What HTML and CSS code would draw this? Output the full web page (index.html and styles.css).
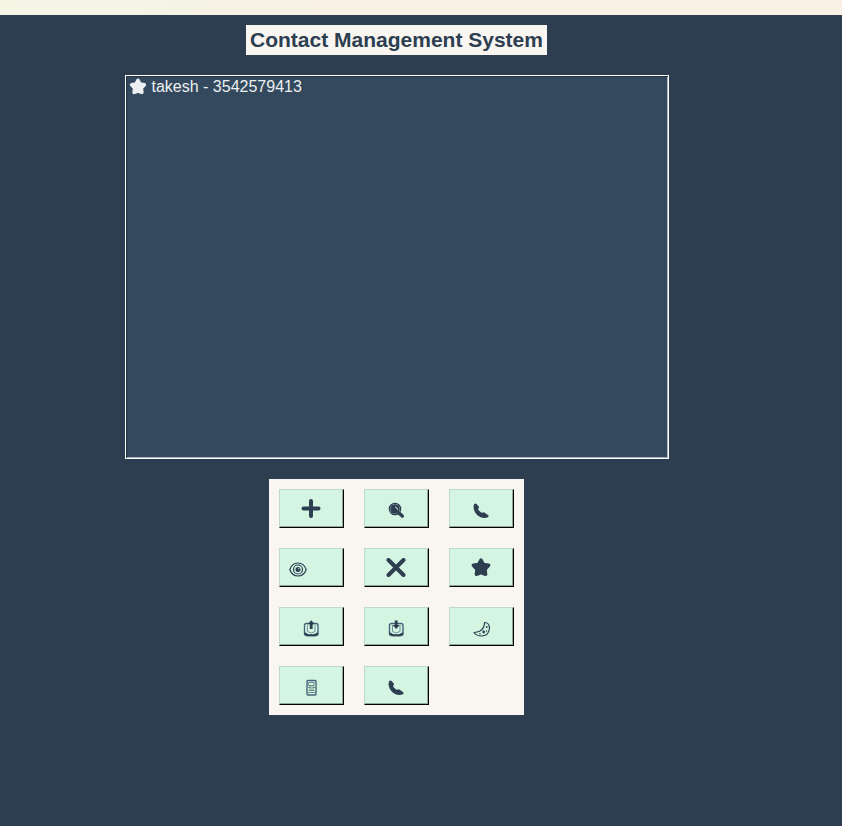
FILE: index.html
```html
<!DOCTYPE html>
<html lang="en">
<head>
<meta charset="utf-8">
<title>Contact Management System</title>
<link rel="stylesheet" href="styles.css">
</head>
<body>
<div class="strip"></div>
<main class="app">
  <h1 class="title">Contact Management System</h1>
  <ul class="contacts">
    <li class="contact">
      <svg class="star" viewBox="0 0 20 20" aria-hidden="true"><path d="M10 2.700l2.100 4 4.900.900-3.300 3.700.6 4.700-4.300-1.500-4.300 1.500.6-4.700L3 7.600l4.900-.900z"/></svg>
      <span>takesh - 3542579413</span>
    </li>
  </ul>
  <div class="actions">
    <button class="action" type="button" aria-label="Add contact">
      <svg class="icon" viewBox="0 0 20 20"><path class="thick" d="M10 2v15M2.500 9.500h15"/></svg>
    </button>
    <button class="action" type="button" aria-label="Search">
      <svg class="icon" viewBox="0 0 20 20"><circle class="solid" cx="9" cy="10" r="4.800"/><circle class="thin" cx="9" cy="10" r="5.700"/><path class="glint" d="M9.500 8q2 .500 2 2.300"/><path class="handle" d="M13.500 14.500l2.800 2.500"/></svg>
    </button>
    <button class="action" type="button" aria-label="Call">
      <svg class="icon" viewBox="0 0 20 20"><path class="solid" d="M3.300 5Q4.500 4 5.600 5L7.800 7.600Q8.200 9 7 10.200Q8.200 12.500 11 13.900Q12 12.800 13.300 13.500L17.300 16.200Q18 17.200 17 18.200Q12 20.300 7 16.800Q2.300 12.500 2.600 7.500Q2.700 5.600 3.300 5z"/></svg>
    </button>
    <button class="action action-start" type="button" aria-label="View contact">
      <svg class="icon" viewBox="0 0 20 20"><path class="thin" d="M1.800 11.500Q4 5 10 5t8.200 6.500Q16 18 10 18t-8.200-6.500z"/><circle class="thin" cx="10" cy="11.500" r="4.500"/><circle class="solid" cx="10" cy="11.500" r="2.500"/><circle class="spot" cx="10.800" cy="10.700" r=".6"/></svg>
    </button>
    <button class="action" type="button" aria-label="Delete contact">
      <svg class="icon" viewBox="0 0 20 20"><path class="thick" d="M2.500 2l15 15M17.500 2l-15 15"/></svg>
    </button>
    <button class="action" type="button" aria-label="Favourite">
      <svg class="icon" viewBox="0 0 20 20"><path class="star-solid" d="M10 2.200l2.300 4.200 5.300.900-3.600 3.900.6 5.100-4.600-1.600-4.600 1.600.6-5.100-3.600-3.900 5.300-.900z"/></svg>
    </button>
    <button class="action" type="button" aria-label="Export contacts">
      <svg class="icon" viewBox="0 0 20 20"><rect class="case" x="3.500" y="6.500" width="13.500" height="12" rx="2"/><path class="base" d="M4.300 16.500l2.500 1.700h7l2.500-1.700"/><path class="tray" d="M6.500 8.500v6l3.700 1.500L14 14.500v-6"/><path class="solid" d="M10.200 3.200l3.600 4h-2.200v4.700H8.800V7.200H6.600z"/></svg>
    </button>
    <button class="action" type="button" aria-label="Import contacts">
      <svg class="icon" viewBox="0 0 20 20"><rect class="case" x="3.500" y="6.500" width="13.500" height="12" rx="2"/><path class="base" d="M4.300 16.500l2.500 1.700h7l2.500-1.700"/><path class="tray" d="M6.500 8.500v6l3.700 1.500L14 14.500v-6"/><path class="solid" d="M8.800 3.500h2.800V8h2.200l-3.600 4-3.600-4h2.200z"/></svg>
    </button>
    <button class="action" type="button" aria-label="Dark mode">
      <svg class="icon" viewBox="0 0 20 20"><path class="thin" d="M13.500 5.500Q18.500 5.500 18.500 11.500Q17.500 19 10.500 19Q5.500 19 3 15.500Q6.500 15.200 9 14Q13.500 11.500 13.500 5.500z"/><circle class="solid" cx="12.700" cy="15" r="1.400"/><circle class="solid" cx="15.700" cy="10" r=".9"/><circle class="solid" cx="9" cy="16.700" r=".8"/><circle class="solid" cx="15.700" cy="14" r=".7"/></svg>
    </button>
    <button class="action" type="button" aria-label="Contact groups">
      <svg class="icon" viewBox="0 0 20 20"><rect class="case" x="6" y="4.500" width="9" height="14.500" rx="1"/><path class="shade" d="M8 10h5v4H8z"/><path class="fine" d="M8 6.500h5v3H8zM7.500 11.500h2M12 11.500h2.500M8 14.500h5M7.500 16.500h6.500"/></svg>
    </button>
    <button class="action" type="button" aria-label="Call history">
      <svg class="icon" viewBox="0 0 20 20"><path class="solid" d="M3.300 5Q4.500 4 5.600 5L7.800 7.600Q8.200 9 7 10.200Q8.200 12.500 11 13.900Q12 12.800 13.300 13.500L17.300 16.200Q18 17.200 17 18.200Q12 20.300 7 16.800Q2.300 12.500 2.600 7.500Q2.700 5.600 3.300 5z"/></svg>
    </button>
  </div>
</main>
</body>
</html>
```
FILE: styles.css
```css
* {
  box-sizing: border-box;
}

body {
  margin: 0;
  min-height: 100vh;
  background: #2c3e50;
  font-family: "Liberation Sans", Arial, sans-serif;
}

.strip {
  height: 15px;
  background: linear-gradient(90deg, #f5f5e6, #f6f3e6 28%, #faf0e6 42%, #faf0e6);
}

.app {
  display: flex;
  flex-direction: column;
  align-items: center;
  gap: 20px;
  padding: 10px 49px 10px 0;
}

.title {
  margin: 0;
  padding: 3px 4px;
  background: #f9f6f2;
  color: #2c3e50;
  font-size: 21px;
  line-height: 24px;
}

.contacts {
  width: 100%;
  max-width: 544px;
  min-height: 384px;
  margin: 0;
  padding: 2px 3px;
  list-style: none;
  background: #34495e;
  border: 1px solid #fff;
  box-shadow: inset 1px 1px #22313f, inset -1px -1px #a9b2ba;
  color: #ecf0f1;
}

.contact {
  display: flex;
  align-items: center;
  gap: 5px;
  font-size: 16px;
  line-height: 18px;
}

.star {
  width: 18px;
  height: 18px;
  fill: #ecf0f1;
  stroke: #ecf0f1;
  stroke-width: 4;
  stroke-linejoin: round;
}

.actions {
  display: grid;
  grid-template-columns: repeat(3, 65px);
  gap: 20px;
  padding: 10px;
  background: #f9f6f2;
}

.action {
  display: flex;
  align-items: center;
  justify-content: center;
  height: 39px;
  padding: 0 1px 0 0;
  background: #d5f5e3;
  border: 1px solid #bcd9ca;
  border-right-color: #000;
  border-bottom-color: #000;
  box-shadow: inset -1px -1px #8fa699;
}

.action-start {
  justify-content: flex-start;
  padding-left: 8px;
}

.icon {
  width: 20px;
  height: 20px;
  fill: none;
  stroke-linecap: round;
  stroke-linejoin: round;
}

.solid {
  fill: #2c3e50;
}

.thick {
  stroke: #2c3e50;
  stroke-width: 4;
}

.thin {
  stroke: #2c3e50;
  stroke-width: 1.2;
}

.handle {
  stroke: #2c3e50;
  stroke-width: 3.5;
}

.glint {
  stroke: #d5f5e3;
  stroke-width: 1;
}

.spot {
  fill: #d5f5e3;
}

.star-solid {
  fill: #2c3e50;
  stroke: #2c3e50;
  stroke-width: 3.5;
}

.case {
  stroke: #46627a;
  stroke-width: 1.4;
}

.base {
  stroke: #2c3e50;
  stroke-width: 2;
}

.tray {
  stroke: #6d9499;
  stroke-width: 1;
}

.shade {
  fill: #a9c4b7;
}

.fine {
  stroke: #6d8b8b;
  stroke-width: 1;
}
```
